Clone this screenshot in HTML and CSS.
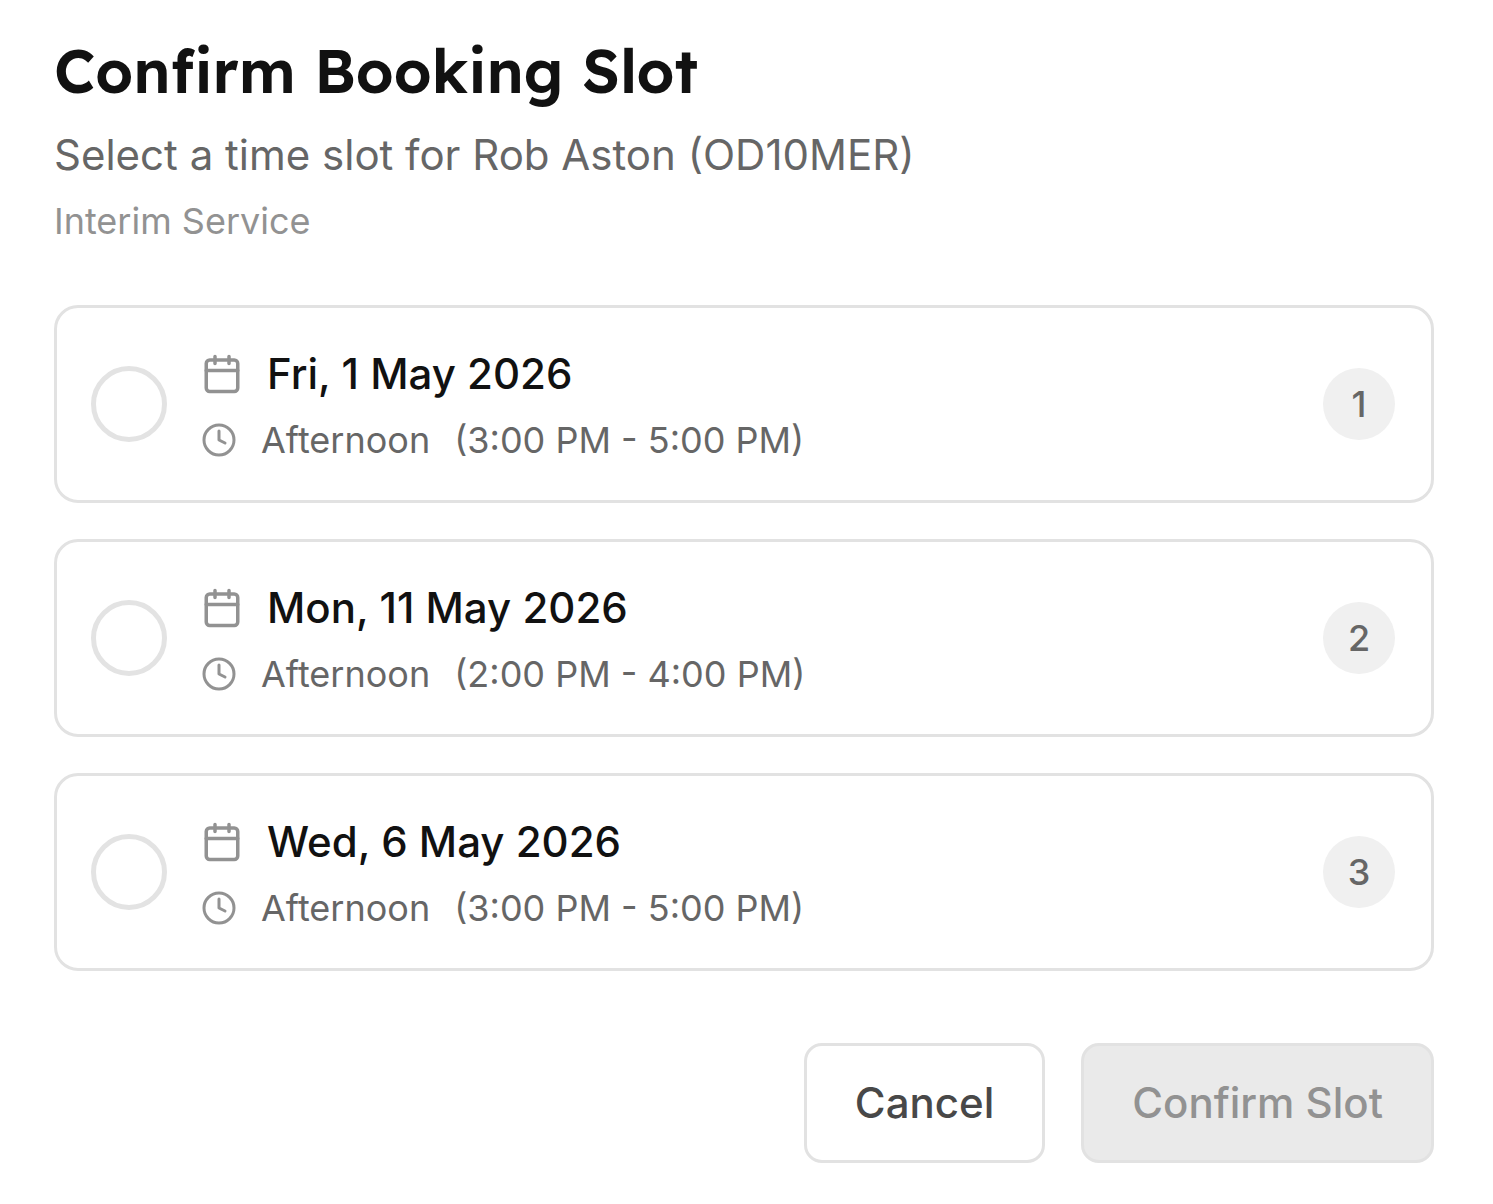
FILE: index.html
```html
<!DOCTYPE html>
<html lang="en">
<head>
  <meta charset="UTF-8" />
  <meta name="viewport" content="width=device-width, initial-scale=1.0"/>
  <title>Confirm Booking Slot</title>
  <link rel="stylesheet" href="styles.css">
</head>
<body>

<!-- shared icons -->
<svg class="sprite" aria-hidden="true">
  <symbol id="icon-calendar" viewBox="0 0 24 24">
    <rect x="3" y="4" width="18" height="18" rx="2"/>
    <path d="M8 2v4M16 2v4M3 10h18"/>
  </symbol>
  <symbol id="icon-clock" viewBox="0 0 24 24">
    <circle cx="12" cy="12" r="10"/>
    <path d="M12 6v6l4 2"/>
  </symbol>
</svg>

<form class="dialog">
  <header class="dialog-header">
    <h1>Confirm Booking Slot</h1>
    <p class="subtitle">Select a time slot for Rob Aston (OD10MER)</p>
    <p class="service">Interim Service</p>
  </header>

  <div class="slot-list" role="radiogroup" aria-label="Time slot">
    <label class="slot">
      <input type="radio" name="slot" value="1">
      <span class="slot-info">
        <span class="slot-date"><svg class="icon"><use href="#icon-calendar"/></svg>Fri, 1 May 2026</span>
        <span class="slot-time"><svg class="icon"><use href="#icon-clock"/></svg><span>Afternoon</span><span>(3:00 PM - 5:00 PM)</span></span>
      </span>
      <span class="slot-number">1</span>
    </label>

    <label class="slot">
      <input type="radio" name="slot" value="2">
      <span class="slot-info">
        <span class="slot-date"><svg class="icon"><use href="#icon-calendar"/></svg>Mon, 11 May 2026</span>
        <span class="slot-time"><svg class="icon"><use href="#icon-clock"/></svg><span>Afternoon</span><span>(2:00 PM - 4:00 PM)</span></span>
      </span>
      <span class="slot-number">2</span>
    </label>

    <label class="slot">
      <input type="radio" name="slot" value="3">
      <span class="slot-info">
        <span class="slot-date"><svg class="icon"><use href="#icon-calendar"/></svg>Wed, 6 May 2026</span>
        <span class="slot-time"><svg class="icon"><use href="#icon-clock"/></svg><span>Afternoon</span><span>(3:00 PM - 5:00 PM)</span></span>
      </span>
      <span class="slot-number">3</span>
    </label>
  </div>

  <div class="actions">
    <button type="button" class="btn">Cancel</button>
    <button type="submit" class="btn btn-confirm" disabled>Confirm Slot</button>
  </div>
</form>

</body>
</html>
```
FILE: styles.css
```css
* {
  box-sizing: border-box;
}
body {
  font-family: Inter, sans-serif;
  font-optical-sizing: none;
  background: #fff;
  color: #111;
  margin: 0;
}
.sprite {
  display: none;
}
.dialog {
  padding: 29px 59px 41px 54px;
}
.dialog-header {
  display: flex;
  flex-direction: column;
  gap: 12px;
  margin-bottom: 60px;
}
h1, p {
  margin: 0;
}
h1 {
  font-family: Lexend, Inter, sans-serif;
  font-size: 60px;
  line-height: 84px;
  font-weight: 600;
}
.subtitle {
  font-size: 42px;
  line-height: 60px;
  color: #666;
}
.service {
  font-size: 36px;
  line-height: 48px;
  color: #929292;
}
.slot-list {
  display: flex;
  flex-direction: column;
  gap: 36px;
}
.slot {
  display: flex;
  align-items: center;
  gap: 34px;
  padding: 36px 36px 36px 34px;
  border: 3px solid #e2e2e2;
  border-radius: 24px;
  cursor: pointer;
}
.slot input {
  appearance: none;
  flex: none;
  width: 76px;
  height: 76px;
  margin: 0;
  border: 5px solid #e3e3e3;
  border-radius: 50%;
}
.slot input:checked {
  border-color: #111;
}
.slot-info {
  flex: 1;
  display: flex;
  flex-direction: column;
  gap: 12px;
}
.slot-date, .slot-time {
  display: flex;
  align-items: center;
  gap: 24px;
}
.slot-date {
  font-size: 42px;
  line-height: 60px;
  font-weight: 500;
}
.slot-time {
  font-size: 36px;
  line-height: 48px;
  color: #666;
}
.icon {
  flex: none;
  width: 36px;
  height: 36px;
  fill: none;
  stroke: #929292;
  stroke-width: 2;
  stroke-linecap: round;
  stroke-linejoin: round;
}
.slot-date .icon {
  width: 42px;
  height: 42px;
}
.slot-number {
  flex: none;
  width: 72px;
  border-radius: 50%;
  background: #f0f0f0;
  color: #666;
  font-size: 36px;
  line-height: 72px;
  font-weight: 500;
  text-align: center;
}
.actions {
  display: flex;
  justify-content: flex-end;
  gap: 36px;
  margin-top: 72px;
}
.btn {
  padding: 27px 48px;
  background: #fff;
  color: #484848;
  border: 3px solid #e2e2e2;
  border-radius: 18px;
  font: inherit;
  font-size: 42px;
  line-height: 60px;
  font-weight: 500;
  cursor: pointer;
}
.btn-confirm:disabled {
  background: #eaeaea;
  color: #929292;
  cursor: default;
}
```
